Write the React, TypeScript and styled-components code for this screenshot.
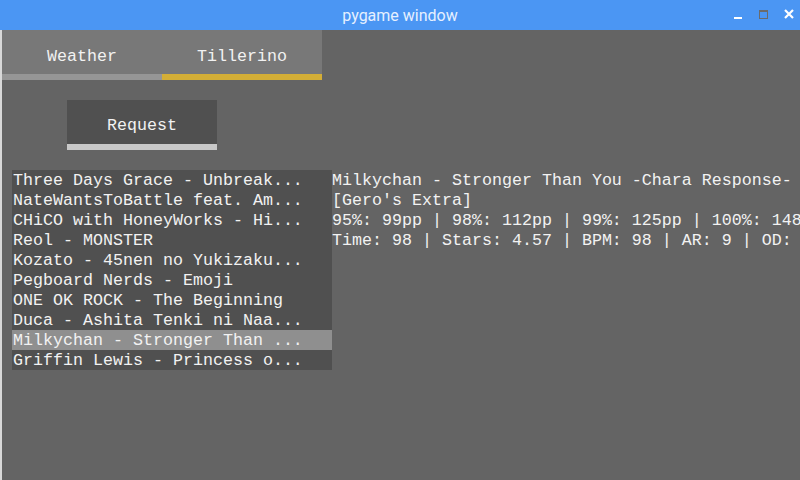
import React, { useState } from 'react';
import styled, { createGlobalStyle } from 'styled-components';

const GlobalStyle = createGlobalStyle`
  html, body {
    margin: 0;
    padding: 0;
    width: 800px;
    height: 480px;
    overflow: hidden;
    background: #646464;
  }
`;

const Window = styled.div`
  width: 800px;
  height: 480px;
  display: flex;
  flex-direction: column;
  overflow: hidden;
`;

const TitleBar = styled.div`
  position: relative;
  height: 30px;
  flex: none;
  background: #4b96f3;
  display: flex;
  align-items: center;
  justify-content: center;
  font-family: Roboto, 'Liberation Sans', sans-serif;
  font-size: 16px;
  color: #e6f0ff;
`;

const Controls = styled.div`
  position: absolute;
  right: 5px;
  top: 0;
  height: 30px;
  display: flex;
  align-items: center;
  gap: 14px;
`;

const Surface = styled.div`
  flex: 1;
  display: flex;
  flex-direction: column;
  border-left: 2px solid #d8d8d8;
  font-family: 'Liberation Mono', 'Courier New', monospace;
  font-size: 16.67px;
  color: #f2f2f2;
  white-space: pre;
`;

const TabBar = styled.div`
  display: flex;
  width: 320px;
`;

const Tab = styled.div<{ $active: boolean }>`
  box-sizing: border-box;
  width: 160px;
  height: 50px;
  padding-top: 2px;
  line-height: 50px;
  text-align: center;
  background: #787878;
  box-shadow: inset 0 -6px 0 ${(p) => (p.$active ? '#d4ae36' : '#969696')};
  cursor: pointer;
`;

const RequestButton = styled.div`
  box-sizing: border-box;
  margin: 20px 0 0 65px;
  width: 150px;
  height: 50px;
  padding-top: 3px;
  line-height: 46px;
  text-align: center;
  background: #505050;
  box-shadow: inset 0 -6px 0 #c8c8c8;
  cursor: pointer;
`;

const Content = styled.div`
  display: flex;
  margin: 20px 0 0 10px;
  align-items: flex-start;
`;

const List = styled.div`
  width: 320px;
  flex: none;
  background: #505050;
  display: flex;
  flex-direction: column;
`;

const Row = styled.div<{ $selected: boolean }>`
  box-sizing: border-box;
  height: 20px;
  padding: 2px 0 0 1px;
  line-height: 18px;
  background: ${(p) => (p.$selected ? '#8f8f8f' : 'transparent')};
  cursor: pointer;
`;

const Details = styled.div`
  padding-top: 2px;
  line-height: 20px;
  display: flex;
  flex-direction: column;
`;

const DetailLine = styled.div`
  height: 20px;
  line-height: 18px;
`;

const songs = [
  'Three Days Grace - Unbreak...',
  'NateWantsToBattle feat. Am...',
  'CHiCO with HoneyWorks - Hi...',
  'Reol - MONSTER',
  'Kozato - 45nen no Yukizaku...',
  'Pegboard Nerds - Emoji',
  'ONE OK ROCK - The Beginning',
  'Duca - Ashita Tenki ni Naa...',
  'Milkychan - Stronger Than ...',
  'Griffin Lewis - Princess o...',
];

const details = [
  'Milkychan - Stronger Than You -Chara Response-',
  "[Gero's Extra]",
  '95%: 99pp | 98%: 112pp | 99%: 125pp | 100%: 148pp',
  'Time: 98 | Stars: 4.57 | BPM: 98 | AR: 9 | OD: 8',
];

const App: React.FC = () => {
  const [tab, setTab] = useState(1);
  const [selected, setSelected] = useState(8);

  return (
    <Window>
      <GlobalStyle />
      <TitleBar>
        pygame window
        <Controls>
          <svg width="12" height="12" viewBox="0 0 12 12">
            <rect x="3" y="8" width="8" height="2" fill="#ffffff" />
          </svg>
          <svg width="12" height="12" viewBox="0 0 12 12">
            <rect x="2.5" y="1.5" width="8" height="8" fill="none" stroke="#6b6b6b" strokeWidth="1" />
            <rect x="2" y="1" width="9" height="2" fill="#6b6b6b" />
          </svg>
          <svg width="12" height="12" viewBox="0 0 12 12">
            <path d="M2 1 L10 9 M10 1 L2 9" stroke="#ffffff" strokeWidth="2.2" />
          </svg>
        </Controls>
      </TitleBar>
      <Surface>
        <TabBar>
          {['Weather', 'Tillerino'].map((name, i) => (
            <Tab key={name} $active={tab === i} onClick={() => setTab(i)}>
              {name}
            </Tab>
          ))}
        </TabBar>
        <RequestButton>Request</RequestButton>
        <Content>
          <List>
            {songs.map((s, i) => (
              <Row key={s} $selected={selected === i} onClick={() => setSelected(i)}>
                {s}
              </Row>
            ))}
          </List>
          <Details>
            {details.map((d) => (
              <DetailLine key={d}>{d}</DetailLine>
            ))}
          </Details>
        </Content>
      </Surface>
    </Window>
  );
};

export default App;
